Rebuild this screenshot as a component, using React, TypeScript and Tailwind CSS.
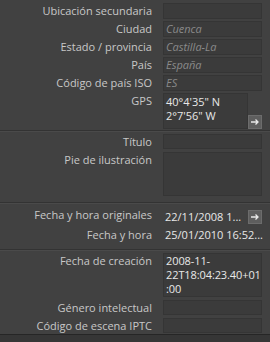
import type { ReactNode } from 'react'

const font = { fontFamily: '"Open Sans", "Noto Sans", sans-serif' }

function ArrowButton() {
  return (
    <div className="w-[14px] h-[14px] shrink-0 bg-[#5e5e5e] border border-[#6c6c6c] flex items-center justify-center">
      <svg width="10" height="8" viewBox="0 0 10 8">
        <path d="M1 4h7M5.5 1.5L8 4 5.5 6.5" stroke="#e8e8e8" strokeWidth="1.3" fill="none" />
      </svg>
    </div>
  )
}

function Box({ h = 'h-4', children, italic }: { h?: string; children?: ReactNode; italic?: boolean }) {
  return (
    <div
      className={`${h} w-full bg-[#3b3b3b] border border-[#353535] px-[2px] leading-[14px] overflow-hidden whitespace-nowrap ${
        italic ? 'italic text-[#8a8a8a]' : 'text-[#e4e4e4]'
      }`}
    >
      {children}
    </div>
  )
}

function Row({ label, children, h = 'h-4' }: { label: string; children?: ReactNode; h?: string }) {
  return (
    <div className={`flex items-start ${h}`}>
      <div className="w-[152px] shrink-0 text-right text-[#c8c8c8] leading-4 whitespace-nowrap">{label}</div>
      <div className="ml-[11px] w-[99px] shrink-0">{children}</div>
    </div>
  )
}

function Separator() {
  return <div className="h-px bg-[#4a4a4a] border-t border-[#333333] box-content" />
}

export default function App() {
  return (
    <div className="w-[270px] h-[342px] bg-[#414141] text-[11px] flex flex-col overflow-hidden" style={font}>
      <div className="pt-[3px] flex flex-col gap-[2px]">
        <Row label="Ubicación secundaria"><Box /></Row>
        <Row label="Ciudad"><Box italic>Cuenca</Box></Row>
        <Row label="Estado / provincia"><Box italic>Castilla-La</Box></Row>
        <Row label="País"><Box italic>España</Box></Row>
        <Row label="Código de país ISO"><Box italic>ES</Box></Row>
        <Row label="GPS" h="h-[36px]">
          <div className="flex items-end">
            <div className="w-[85px] h-[36px] bg-[#3b3b3b] border border-[#353535] px-[2px] text-[#e8e8e8] leading-[14px] pt-px">
              <div>40°4'35" N</div>
              <div>2°7'56" W</div>
            </div>
            <ArrowButton />
          </div>
        </Row>
      </div>

      <div className="mt-[1px]"><Separator /></div>

      <div className="pt-[2px] flex flex-col gap-[3px]">
        <Row label="Título" h="h-[15px]"><Box h="h-[15px]" /></Row>
        <Row label="Pie de ilustración" h="h-[44px]"><Box h="h-[44px]" /></Row>
      </div>

      <div className="mt-[6px]"><Separator /></div>

      <div className="pt-[3px] flex flex-col gap-[2px]">
        <Row label="Fecha y hora originales" h="h-4">
          <div className="flex items-center justify-between text-[#e8e8e8] leading-4 pl-[2px] mt-[2px]">
            <span className="whitespace-nowrap">22/11/2008 1...</span>
            <ArrowButton />
          </div>
        </Row>
        <div className="mt-[2px]">
          <Row label="Fecha y hora">
            <div className="text-[#e8e8e8] leading-4 pl-[2px] whitespace-nowrap">25/01/2010 16:52...</div>
          </Row>
        </div>
      </div>

      <div className="mt-[6px]"><Separator /></div>

      <div className="pt-[2px] flex flex-col gap-[3px]">
        <Row label="Fecha de creación" h="h-[44px]">
          <div className="h-[44px] w-full bg-[#3b3b3b] border border-[#353535] pl-[2px] text-[#e8e8e8] leading-[14px] whitespace-nowrap overflow-hidden tracking-[-0.1px]">
            <div>2008-11-</div>
            <div>22T18:04:23.40+01</div>
            <div>:00</div>
          </div>
        </Row>
        <Row label="Género intelectual" h="h-[15px]"><Box h="h-[15px]" /></Row>
        <Row label="Código de escena IPTC" h="h-[15px]"><Box h="h-[15px]" /></Row>
      </div>

      <div className="mt-auto h-[8px] border-t border-[#262626] bg-[#363636]" />
    </div>
  )
}
